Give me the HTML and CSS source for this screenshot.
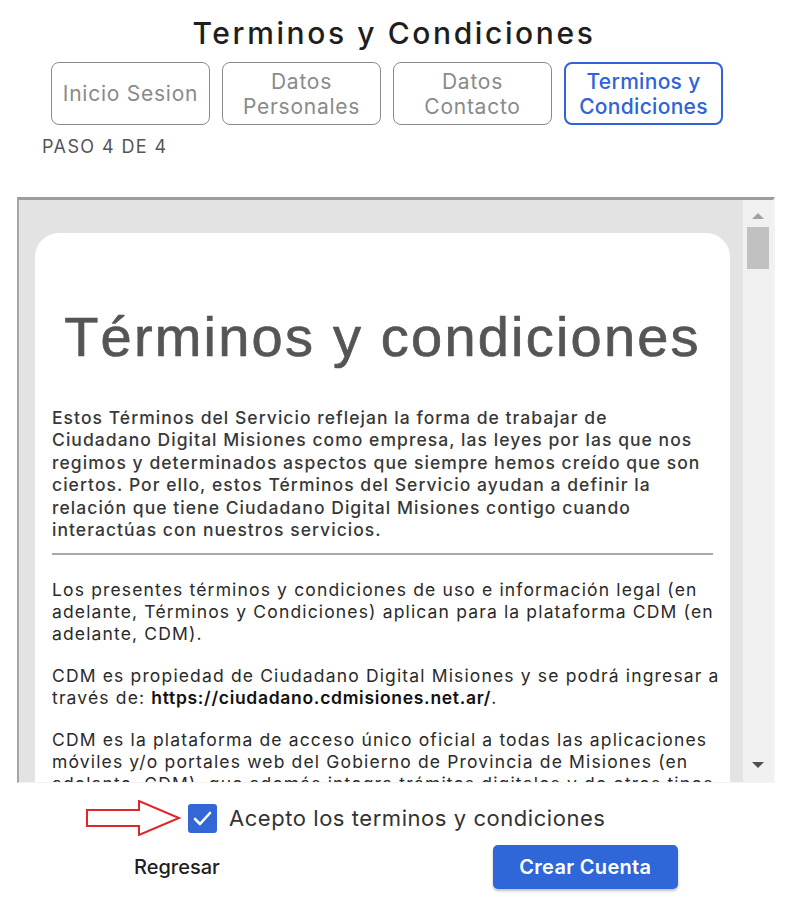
FILE: index.html
```html
<!DOCTYPE html>
<html lang="es">
<head>
<meta charset="utf-8">
<title>Terminos y Condiciones</title>
<link rel="stylesheet" href="styles.css">
</head>
<body>
<div class="page">
  <h1 class="title">Terminos y Condiciones</h1>
  <div class="steps">
    <div class="step">Inicio Sesion</div>
    <div class="step">Datos<br>Personales</div>
    <div class="step">Datos<br>Contacto</div>
    <div class="step active">Terminos y<br>Condiciones</div>
  </div>
  <div class="paso">PASO 4 DE 4</div>

  <div class="frame">
    <div class="viewport">
      <div class="card">
        <h2 class="doc-title">Términos y condiciones</h2>
        <p class="lead">Estos Términos del Servicio reflejan la forma de trabajar de<br>Ciudadano Digital Misiones como empresa, las leyes por las que nos<br>regimos y determinados aspectos que siempre hemos creído que son<br>ciertos. Por ello, estos Términos del Servicio ayudan a definir la<br>relación que tiene Ciudadano Digital Misiones contigo cuando<br>interactúas con nuestros servicios.</p>
        <hr class="rule">
        <p class="txt">Los presentes términos y condiciones de uso e información legal (en<br>adelante, Términos y Condiciones) aplican para la plataforma CDM (en<br>adelante, CDM).</p>
        <p class="txt">CDM es propiedad de Ciudadano Digital Misiones y se podrá ingresar a<br>través de: <b>https://ciudadano.cdmisiones.net.ar/</b>.</p>
        <p class="txt">CDM es la plataforma de acceso único oficial a todas las aplicaciones<br>móviles y/o portales web del Gobierno de Provincia de Misiones (en<br>adelante, CDM), que además integra trámites digitales y de otros tipos</p>
      </div>
    </div>
    <div class="scrollbar">
      <div class="arrow-up"></div>
      <div class="thumb"></div>
      <div class="track-fill"></div>
      <div class="arrow-down"></div>
    </div>
  </div>

  <div class="accept">
    <svg class="pointer" width="96" height="36" viewBox="0 0 96 36">
      <polygon points="1,10 53,10 53,1 93,18 53,35 53,26 1,26" fill="#fff" stroke="#e0262b" stroke-width="2"/>
    </svg>
    <span class="check">
      <svg width="29" height="29" viewBox="0 0 29 29"><path d="M7 15 L12 20 L22 9" fill="none" stroke="#fff" stroke-width="2.6" stroke-linecap="round" stroke-linejoin="round"/></svg>
    </span>
    <span class="accept-label">Acepto los terminos y condiciones</span>
  </div>

  <div class="actions">
    <span class="back">Regresar</span>
    <span class="create">Crear Cuenta</span>
  </div>
</div>
</body>
</html>
```

FILE: styles.css
```css
* { box-sizing: border-box; }
html, body { margin: 0; padding: 0; background: #fff; }
body { font-family: Inter, Roboto, "Liberation Sans", Arial, sans-serif; color: #222; }
.page { width: 788px; height: 910px; overflow: hidden; }

.title {
  margin: 14px 0 0;
  text-align: center;
  font-size: 30px;
  line-height: 38px;
  font-weight: 500;
  letter-spacing: 2.6px;
  color: #1e1e1e;
}
.steps {
  display: flex;
  gap: 12px;
  padding-left: 51px;
  margin-top: 10px;
}
.step {
  width: 159px;
  height: 63px;
  border: 1.5px solid #8a8a8a;
  border-radius: 8px;
  display: flex;
  align-items: center;
  justify-content: center;
  text-align: center;
  font-size: 21px;
  line-height: 25px;
  color: #8a8a8a;
  letter-spacing: 0.75px;
}
.step.active {
  border: 2px solid #2f63d7;
  color: #2f63d7;
  font-weight: 500;
  letter-spacing: 0.3px;
}
.paso {
  margin: 10px 0 0 42px;
  font-size: 18px;
  line-height: 24px;
  color: #555;
  letter-spacing: 1.4px;
}

.frame {
  margin: 38px 0 0 17px;
  width: 758px;
  height: 586px;
  display: flex;
  background: #e3e3e3;
  border-top: 3px solid #9d9d9d;
  border-left: 2px solid #a5a5a5;
  border-right: 2px solid #f3f3f3;
  border-bottom: 1px solid #f3f3f3;
}
.viewport {
  flex: 1;
  overflow: hidden;
  padding: 33px 13px 0 16px;
}
.card {
  background: #fff;
  border-radius: 24px;
  padding: 71px 17px 0 17px;
  min-height: 700px;
}
.doc-title {
  margin: 0;
  text-align: center;
  font-family: "Liberation Sans", Arial, sans-serif;
  font-weight: normal;
  font-size: 56px;
  line-height: 66px;
  letter-spacing: 2.2px;
  color: #555;
  -webkit-text-stroke: 0.7px #555;
  white-space: nowrap;
}
.lead {
  margin: 37px 0 0;
  font-size: 17.5px;
  line-height: 22.4px;
  font-weight: 500;
  letter-spacing: 1.05px;
  color: #383838;
  white-space: nowrap;
}
.rule {
  margin: 12px 0 0;
  border: 0;
  height: 2px;
  background: #a8a8a8;
}
.txt {
  margin: 24px 0 20px;
  font-size: 17.5px;
  line-height: 22px;
  letter-spacing: 1.15px;
  color: #2a2a2a;
  white-space: nowrap;
}
.txt + .txt { margin-top: 0; }
.txt b { font-weight: 600; color: #111; letter-spacing: 0.7px; }

.scrollbar {
  width: 30px;
  background: #f1f1f1;
  display: flex;
  flex-direction: column;
  align-items: center;
}
.arrow-up {
  margin-top: 13px;
  width: 0; height: 0;
  border-left: 6px solid transparent;
  border-right: 6px solid transparent;
  border-bottom: 6px solid #a3a3a3;
}
.thumb {
  margin-top: 8px;
  width: 22px;
  height: 42px;
  background: #c1c1c1;
}
.track-fill { flex: 1; }
.arrow-down {
  margin-bottom: 14px;
  width: 0; height: 0;
  border-left: 6px solid transparent;
  border-right: 6px solid transparent;
  border-top: 6px solid #505050;
}

.accept {
  display: flex;
  align-items: center;
  margin: 17px 0 0 86px;
  height: 36px;
}
.pointer { display: block; }
.check {
  margin-left: 6px;
  width: 29px;
  height: 29px;
  border-radius: 3px;
  background: #3367d6;
  display: flex;
}
.accept-label {
  margin-left: 12px;
  font-size: 22px;
  color: #333;
  letter-spacing: 0.55px;
}
.actions {
  display: flex;
  align-items: center;
  margin: 9px 0 0 134px;
  height: 44px;
}
.back {
  font-size: 20px;
  font-weight: 500;
  color: #1e1e1e;
}
.create {
  margin-left: 273px;
  width: 185px;
  height: 44px;
  border-radius: 5px;
  background: #2f66d8;
  color: #fff;
  font-size: 20px;
  font-weight: 600;
  letter-spacing: 0.3px;
  display: flex;
  align-items: center;
  justify-content: center;
  box-shadow: 0 2px 3px rgba(0,0,0,0.25);
}
```
